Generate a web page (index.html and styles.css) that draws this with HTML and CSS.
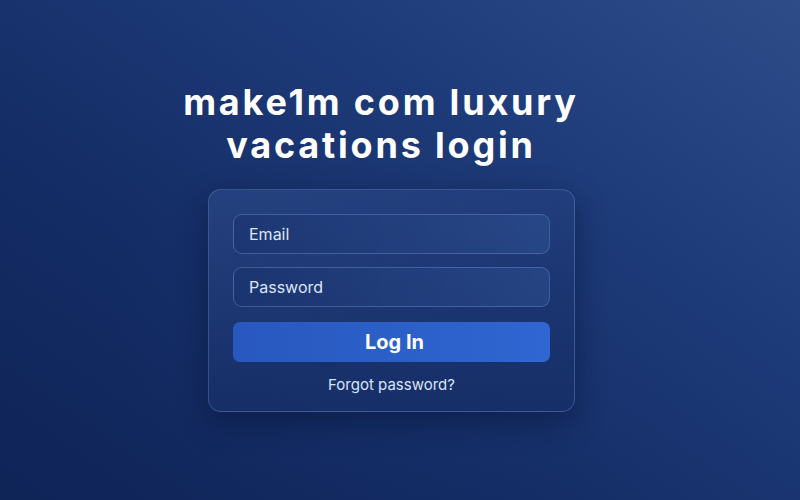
FILE: index.html
```html
<!DOCTYPE html>
<html lang="en">
<head>
<meta charset="utf-8">
<title>make1m com luxury vacations login</title>
<link rel="stylesheet" href="styles.css">
</head>
<body>
<main class="page">
  <h1 class="title">make1m com luxury<br>vacations login</h1>
  <form class="card">
    <div class="field">Email</div>
    <div class="field">Password</div>
    <div class="btn">Log In</div>
    <div class="forgot">Forgot password?</div>
  </form>
</main>
</body>
</html>
```
FILE: styles.css
```css
html, body {
  margin: 0;
  height: 100%;
}
body {
  width: 800px;
  height: 500px;
  overflow: hidden;
  font-family: Inter, "Noto Sans", sans-serif;
  color: #fff;
  background:
    radial-gradient(ellipse 420px 300px at 400px 300px, rgba(30, 55, 115, 0.35), rgba(30, 55, 115, 0) 70%),
    linear-gradient(215deg, #2d4c88 0%, #1d3a78 35%, #142d66 65%, #0f2457 100%);
}
.page {
  display: flex;
  flex-direction: column;
  width: 367px;
  padding-left: 208px;
  padding-top: 81px;
}
.title {
  margin: 0 -40px 0 -61px;
  font-size: 36px;
  line-height: 43px;
  font-weight: 700;
  letter-spacing: 2.8px;
  text-align: center;
  color: #ffffff;
}
.card {
  margin: 22px 0 0;
  box-sizing: border-box;
  width: 367px;
  height: 223px;
  padding: 24px 24px 0;
  display: flex;
  flex-direction: column;
  border: 1px solid rgba(120, 150, 210, 0.35);
  border-radius: 13px;
  background: linear-gradient(160deg, rgba(55, 85, 150, 0.45) 0%, rgba(30, 55, 115, 0.35) 60%, rgba(20, 42, 95, 0.35) 100%);
  box-shadow: 0 10px 30px rgba(5, 15, 45, 0.45);
}
.field {
  box-sizing: border-box;
  height: 40px;
  padding-left: 15px;
  display: flex;
  align-items: center;
  font-size: 16px;
  color: #dde6f7;
  border: 1px solid rgba(120, 150, 215, 0.4);
  border-radius: 9px;
  background: linear-gradient(90deg, rgba(25, 50, 110, 0.55), rgba(50, 85, 150, 0.45));
}
.field + .field {
  margin-top: 13px;
}
.btn {
  margin-top: 15px;
  height: 40px;
  padding-left: 6px;
  display: flex;
  align-items: center;
  justify-content: center;
  font-size: 20px;
  font-weight: 700;
  color: #ffffff;
  border-radius: 7px;
  background: linear-gradient(90deg, #2858bf, #2f66d1);
}
.forgot {
  margin-top: 13px;
  text-align: center;
  font-size: 15px;
  color: #dbe4f5;
}
```
